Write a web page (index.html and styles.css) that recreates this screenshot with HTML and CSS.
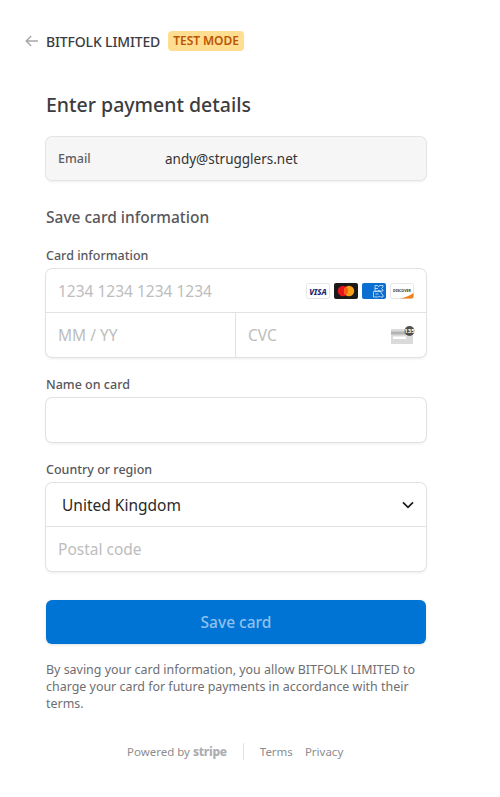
FILE: index.html
```html
<!DOCTYPE html>
<html lang="en">
<head>
<meta charset="utf-8">
<title>Enter payment details</title>
<link rel="stylesheet" href="styles.css">
</head>
<body>
<header class="top">
  <svg class="back" width="14" height="12" viewBox="0 0 14 12" fill="none"><path d="M13 6H1.5M6.2 1 1.2 6l5 5" stroke="#a8a8aa" stroke-width="1.4"/></svg>
  <span class="merchant">BITFOLK LIMITED</span>
  <span class="badge">TEST MODE</span>
</header>
<main class="main">
  <h1 class="title">Enter payment details</h1>
  <div class="email">
    <span class="email-label">Email</span>
    <span class="email-value">andy@strugglers.net</span>
  </div>
  <h2 class="subtitle">Save card information</h2>

  <div class="label label-card">Card information</div>
  <div class="box">
    <div class="row row-line">
      <span class="ph">1234 1234 1234 1234</span>
      <span class="brands">
        <svg width="24" height="16" viewBox="0 0 24 16"><rect x=".5" y=".5" width="23" height="15" rx="2" fill="#fff" stroke="#e6e6e6"/><text x="12" y="11.500" text-anchor="middle" class="visa">VISA</text></svg>
        <svg width="24" height="16" viewBox="0 0 24 16"><rect width="24" height="16" rx="2" fill="#1a1a1a"/><circle cx="9" cy="8" r="5.200" fill="#e8131c"/><circle cx="15" cy="8" r="5.200" fill="#f79e1b"/><path d="M12 3.800a5.200 5.200 0 0 1 0 8.400 5.200 5.200 0 0 1 0-8.400z" fill="#f2600f"/></svg>
        <svg width="24" height="16" viewBox="0 0 24 16"><rect width="24" height="16" rx="2" fill="#0a6fd0"/><path d="M13 2.500h2.500l1 1.500 1-1.500H21v1.500l-1.500 1.500L21 7v1h-3l-1-1-1 1h-3zM11.500 8.500H19V10l2 2v2h-2.500l-1-1-1 1h-5z" fill="none" stroke="#d8e9fa" stroke-width=".8"/><path d="M13 5.500h3M13.500 11h3" stroke="#d8e9fa" stroke-width=".8"/></svg>
        <svg width="24" height="16" viewBox="0 0 24 16"><rect x=".5" y=".5" width="23" height="15" rx="2" fill="#fff" stroke="#e6e6e6"/><path d="M10 15.500c6-1 10-3 13.500-5.500v3.500a2 2 0 0 1-2 2z" fill="#f0801e"/><text x="12" y="8.800" text-anchor="middle" class="disc">DISCOVER</text></svg>
      </span>
    </div>
    <div class="row-split">
      <div class="row cell cell-line"><span class="ph">MM / YY</span></div>
      <div class="row cell">
        <span class="ph">CVC</span>
        <svg class="cvc" width="24" height="18" viewBox="0 0 24 18"><rect x="0" y="3" width="22" height="15" fill="#dadada"/><rect x="0" y="5.500" width="22" height="3" fill="#b4b4b4"/><rect x="2" y="10.500" width="13" height="2.500" fill="#fff"/><circle cx="18.500" cy="5" r="5" fill="#4f4f4f"/><text x="18.500" y="7" text-anchor="middle" class="cvc-num">135</text></svg>
      </div>
    </div>
  </div>

  <div class="label label-name">Name on card</div>
  <div class="box"><div class="row"></div></div>

  <div class="label label-country">Country or region</div>
  <div class="box">
    <div class="row row-line row-select">
      <span class="country">United Kingdom</span>
      <svg class="chev" width="12" height="8" viewBox="0 0 12 8" fill="none"><path d="M1 1.300 6 6.300l5-5" stroke="#1a1a1a" stroke-width="1.700"/></svg>
    </div>
    <div class="row"><span class="ph">Postal code</span></div>
  </div>

  <button class="pay" type="button">Save card</button>
  <p class="legal">By saving your card information, you allow BITFOLK LIMITED to charge your card for future payments in accordance with their terms.</p>
  <footer class="foot">
    <span class="powered">Powered by <b class="stripe">stripe</b></span>
    <span class="sep"></span>
    <span class="links"><span>Terms</span><span>Privacy</span></span>
  </footer>
</main>
</body>
</html>
```
FILE: styles.css
```css
* { box-sizing: border-box; }
html, body { margin: 0; background: #fff; }
body {
  font-family: "Noto Sans", "Open Sans", sans-serif;
  color: #1a1a1a;
  height: 797px;
  overflow: hidden;
}
.top {
  display: flex;
  align-items: center;
  height: 20px;
  margin: 31px 0 0 25px;
}
.back { margin-right: 7px; }
.merchant { font-size: 14px; font-weight: 500; color: #3c3c40; letter-spacing: -.15px; }
.badge {
  margin-left: 8px;
  background: #ffde92;
  color: #bb5504;
  font-size: 12px;
  font-weight: 600;
  line-height: 20px;
  padding: 0 5px;
  border-radius: 4px;
  letter-spacing: -.05px;
}
.main { margin: 0 74px 0 46px; }
.title {
  margin: 40px 0 0;
  font-size: 19.500px;
  line-height: 28px;
  font-weight: 500;
  color: #3c3c40;
}
.email {
  display: flex;
  align-items: center;
  height: 43px;
  margin: 18px 0 0;
  background: #f6f6f6;
  border-radius: 6px;
  box-shadow: 0 0 0 1px #e4e4e4, 0 2px 3px rgba(0,0,0,.07);
  padding-left: 12px;
}
.email-label { width: 107px; font-size: 12.500px; font-weight: 500; color: #5e5e62; }
.email-value { font-size: 13.500px; color: #333; }
.subtitle {
  margin: 26px 0 0;
  font-size: 15.500px;
  line-height: 22px;
  font-weight: 500;
  color: #58585c;
}
.label { font-size: 12.500px; line-height: 17px; font-weight: 500; color: #58585c; margin-bottom: 5px; }
.label-card { margin-top: 19px; }
.label-name { margin-top: 19px; }
.label-country { margin-top: 19px; }
.box {
  background: #fff;
  border-radius: 6px;
  box-shadow: 0 0 0 1px #e2e2e2, 0 2px 3px rgba(0,0,0,.08);
  overflow: hidden;
}
.row {
  display: flex;
  align-items: center;
  justify-content: space-between;
  height: 44px;
  padding: 0 12px;
}
.row-line { border-bottom: 1px solid #e2e2e2; }
.row-split { display: grid; grid-template-columns: 190px 1fr; }
.cell-line { border-right: 1px solid #e2e2e2; }
.ph { font-size: 15.500px; color: #bdbdbd; }
.brands { display: flex; gap: 4px; margin-right: 0; }
.brands svg { display: block; }
.visa { font: italic 800 8px "Noto Sans", sans-serif; fill: #1a1f71; }
.disc { font: 700 3.600px "Noto Sans", sans-serif; fill: #333; }
.cvc { margin-right: -1px; }
.cvc-num { font: 700 6px "Noto Sans", sans-serif; fill: #fff; }
.row-select { padding: 0 12px 0 16px; }
.country { font-size: 15.500px; color: #2a2a2a; }
.pay {
  display: block;
  width: 100%;
  height: 44px;
  margin-top: 29px;
  border: 0;
  border-radius: 6px;
  background: #0074d4;
  color: #8fc0ee;
  font: 500 15.500px "Noto Sans", sans-serif;
  box-shadow: 0 1px 3px rgba(0,0,0,.12);
}
.legal {
  margin: 17px -6px 0 0;
  font-size: 12.450px;
  line-height: 17px;
  color: #6e6e72;
}
.foot {
  display: flex;
  align-items: center;
  height: 17px;
  margin: 31px 0 0 81px;
  font-size: 11.500px;
  color: #8c8c8f;
}
.stripe { font-weight: 800; color: #adadb0; font-size: 12px; letter-spacing: -.3px; }
.sep { width: 1px; height: 17px; background: #e4e4e4; margin: 0 16px; }
.links { display: flex; gap: 12px; }
```
